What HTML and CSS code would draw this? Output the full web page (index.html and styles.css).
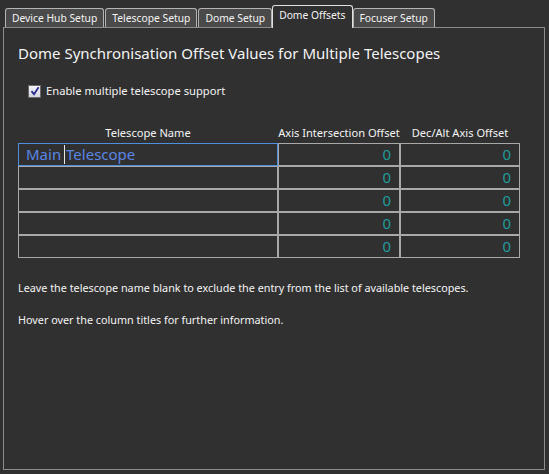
FILE: index.html
```html
<!DOCTYPE html>
<html lang="en">
<head>
    <meta charset="UTF-8">
    <title>Dome Offsets</title>
    <link rel="stylesheet" href="styles.css">
</head>
<body>

    <div class="window">
        <!-- Tab strip -->
        <div class="tabs">
            <div class="tab">Device Hub Setup</div>
            <div class="tab">Telescope Setup</div>
            <div class="tab">Dome Setup</div>
            <div class="tab active">Dome Offsets</div>
            <div class="tab">Focuser Setup</div>
        </div>

        <div class="panel">
            <div class="title">Dome Synchronisation Offset Values for Multiple Telescopes</div>

            <label class="check-row">
                <span class="checkbox">
                    <svg width="10" height="10" viewBox="0 0 10 10">
                        <path d="M1.5 5.2 L4 8.2 L8.6 1.2" fill="none" stroke="#2b2b8c" stroke-width="1.8"/>
                    </svg>
                </span>
                Enable multiple telescope support
            </label>

            <!-- Offsets grid -->
            <div class="grid-head">
                <div>Telescope Name</div>
                <div>Axis Intersection Offset</div>
                <div>Dec/Alt Axis Offset</div>
            </div>
            <div class="grid">
                <div class="cell name focused">Main <span class="caret"></span>Telescope</div>
                <div class="cell num">0</div>
                <div class="cell num">0</div>

                <div class="cell name"></div>
                <div class="cell num">0</div>
                <div class="cell num">0</div>

                <div class="cell name"></div>
                <div class="cell num">0</div>
                <div class="cell num">0</div>

                <div class="cell name"></div>
                <div class="cell num">0</div>
                <div class="cell num">0</div>

                <div class="cell name"></div>
                <div class="cell num">0</div>
                <div class="cell num">0</div>
            </div>

            <p class="note first">Leave the telescope name blank to exclude the entry from the list of available telescopes.</p>
            <p class="note">Hover over the column titles for further information.</p>
        </div>
    </div>

</body>
</html>
```

FILE: styles.css
```css
body {
    margin: 0;
    padding: 0;
    background: #303030;
    color: #f4f4f4;
    font-family: "Noto Sans", sans-serif;
}

.window {
    padding: 6px 4px 5px 3px;
}

/* Tabs */
.tabs {
    display: flex;
    align-items: flex-end;
    height: 21px;
    padding-left: 2px;
}

.tab {
    height: 18px;
    line-height: 18px;
    padding: 0 6px;
    margin-right: 1px;
    font-size: 10.3px;
    background: #4a4a4a;
    border: 1px solid #b4b4b4;
    border-bottom: none;
    border-radius: 3px 3px 0 0;
    white-space: nowrap;
}

.tab.active {
    position: relative;
    height: 22px;
    line-height: 19px;
    margin: 0 0 -1px -1px;
    padding: 0 6px;
    background: #303030;
    border-color: #e0e0e0;
    z-index: 1;
}

/* Main panel */
.panel {
    height: 427px;
    border: 1px solid #8c8c8c;
    padding: 14px 14px 0 14px;
}

.title {
    font-size: 15px;
    line-height: 22px;
}

.check-row {
    display: flex;
    align-items: center;
    margin: 19px 0 0 10px;
    font-size: 11.2px;
    line-height: 16px;
}

.checkbox {
    display: inline-flex;
    justify-content: center;
    align-items: center;
    width: 11px;
    height: 11px;
    margin-right: 5px;
    border: 1px solid #6a6a6a;
    background: linear-gradient(#f4f4fa, #d4d4e0);
}

/* Grid */
.grid-head,
.grid {
    display: grid;
    grid-template-columns: 258px 120px 118px;
    column-gap: 2px;
    width: 500px;
}

.grid-head {
    margin-top: 26px;
    padding: 0 1px;
    font-size: 11.1px;
    line-height: 16px;
}

.grid-head > div {
    white-space: nowrap;
    display: flex;
    justify-content: center;
}

.grid {
    margin-top: 2px;
    padding: 1px;
    row-gap: 2px;
    background: #a8a8a8;
}

.cell {
    height: 21px;
    line-height: 21px;
    background: #303030;
    font-size: 15px;
}

.cell.name {
    padding-left: 7px;
    color: #5a86e6;
}

.cell.focused {
    outline: 1px solid #4d8fdc;
}

.caret {
    display: inline-block;
    width: 0;
    height: 19px;
    margin-left: -1px;
    margin-right: 1px;
    vertical-align: -4px;
    border-left: 1px solid #e8e8e8;
}

.cell.num {
    text-align: right;
    padding-right: 8px;
    color: #1f9a9a;
}

.note {
    margin: 22px 0 0 0;
    font-size: 10.8px;
    line-height: 16px;
}

.note.first + .note {
    margin-top: 16px;
}
```
